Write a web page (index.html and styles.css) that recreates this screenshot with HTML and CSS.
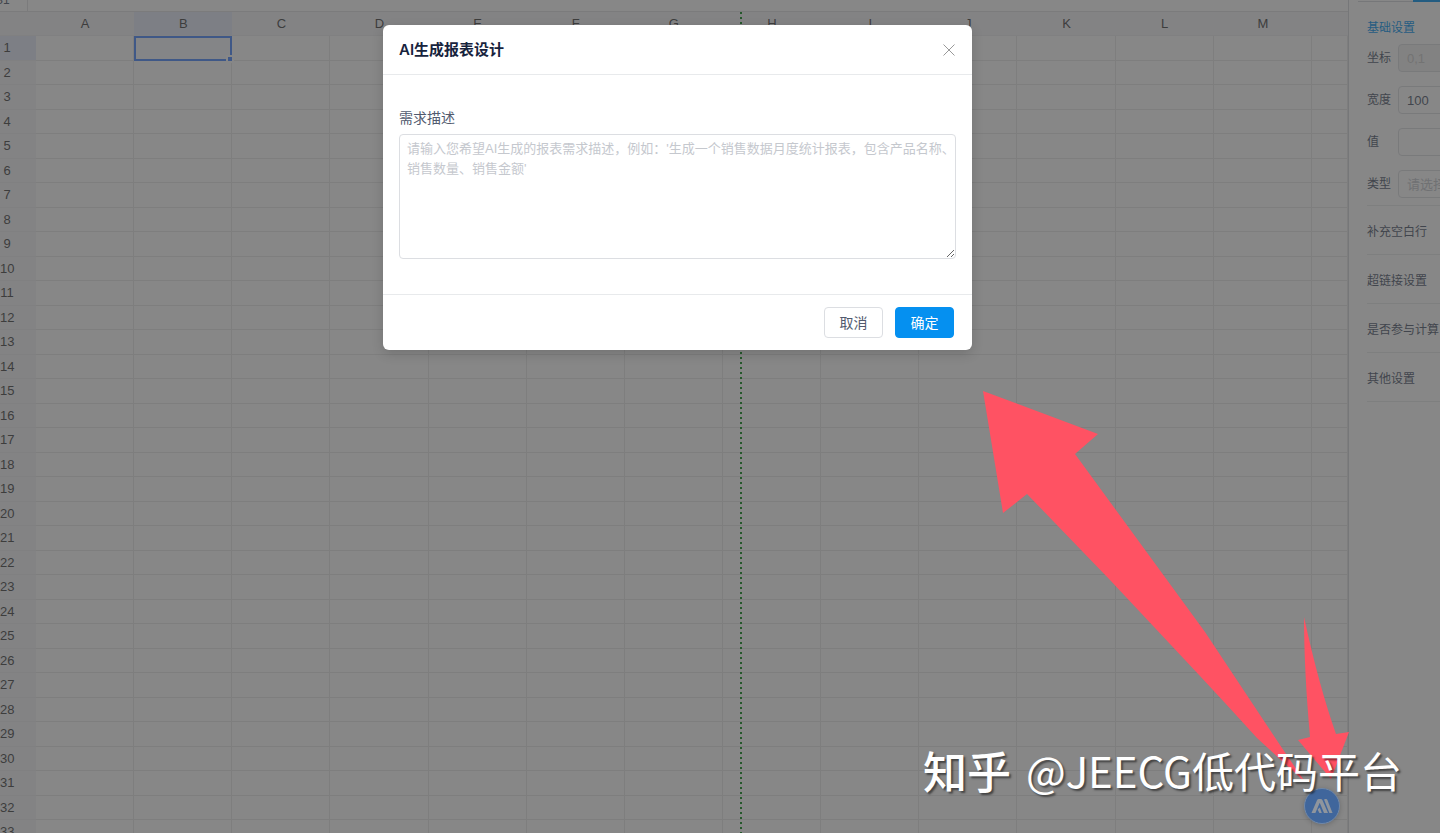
FILE: index.html
```
<!DOCTYPE html>
<html lang="zh-CN">
<head>
    <meta charset="UTF-8">
    <title>AI生成报表设计</title>
    <link rel="stylesheet" href="styles.css">
</head>
<body>
    <div class="designer">
        <main class="sheet">
            <div class="formula-bar"><span class="cell-name">B1</span></div>
            <div class="grid-wrap">
                <table class="grid" id="grid">
                    <thead><tr id="letters"></tr></thead>
                    <tbody id="rows"></tbody>
                </table>
                <!-- print page boundary -->
                <div class="page-break"></div>
            </div>
        </main>
        <aside class="panel">
            <div class="tabs"><span class="tab"></span><span class="tab active"></span></div>
            <form class="settings">
                <h2>基础设置</h2>
                <div class="field"><label for="coord">坐标</label><input id="coord" type="text" value="0,1" disabled></div>
                <div class="field"><label for="width">宽度</label><input id="width" type="text" value="100"></div>
                <div class="field"><label for="val">值</label><input id="val" type="text"></div>
                <div class="field"><label for="type">类型</label><select id="type"><option>请选择</option></select></div>
            </form>
            <div class="group">补充空白行</div>
            <div class="group">超链接设置</div>
            <div class="group">是否参与计算</div>
            <div class="group">其他设置</div>
        </aside>
    </div>

    <div class="mask">
        <div class="modal" role="dialog" aria-labelledby="modal-title">
            <header class="modal-header">
                <h1 id="modal-title">AI生成报表设计</h1>
                <button type="button" class="close" aria-label="关闭">
                    <svg width="12" height="12" viewBox="0 0 12 12"><path d="M0.5 0.5L11.5 11.5M11.5 0.5L0.5 11.5" stroke="#999" fill="none"/></svg>
                </button>
            </header>
            <div class="modal-body">
                <label for="demand">需求描述</label>
                <textarea id="demand" placeholder="请输入您希望AI生成的报表需求描述，例如：'生成一个销售数据月度统计报表，包含产品名称、销售数量、销售金额'"></textarea>
            </div>
            <footer class="modal-footer">
                <button type="button" class="btn">取消</button>
                <button type="button" class="btn primary">确定</button>
            </footer>
        </div>
    </div>

    <button type="button" class="ai-button" aria-label="AI">
        <svg width="22" height="16" viewBox="0 0 22 16">
            <path d="M0.5 15L6 2.2Q6.6 1 8 1H10V5H8.6L4.4 15Z" fill="#8f959d"/>
            <path d="M9.5 1Q11 1 11.5 2.2L17 15H13L8.6 4.5Z" fill="#8f959d"/>
            <path d="M6.6 11.5L8.8 9.6L10.8 15H8.4Z" fill="#8f959d"/>
            <path d="M13.4 1H15.2Q16 1 16.4 2L21.5 15H18.4L13.4 2.6Z" fill="#8f959d"/>
        </svg>
    </button>

    <svg class="arrows" width="370" height="400" viewBox="0 0 370 400">
        <path d="M3 11L118 54L95 74L225 252L302 368L325 402L277 358Q248 326 220 296L130 200L47 114L23 133Z" fill="#ff5263"/>
        <path d="M324 237Q339 306 356 354L369 352L351 399L318 360L330 357Q324 290 324 237Z" fill="#ff5263"/>
    </svg>
    <div class="watermark"><b>知乎</b> <span>@JEECG低代码平台</span></div>

    <script>
        var letters = document.getElementById('letters');
        var rows = document.getElementById('rows');
        var names = ['', 'A', 'B', 'C', 'D', 'E', 'F', 'G', 'H', 'I', 'J', 'K', 'L', 'M', ''];

        names.forEach(function(name) {
            var th = document.createElement('th');
            th.textContent = name;
            if (name === 'B') th.className = 'current';
            letters.appendChild(th);
        });

        for (var r = 1; r <= 33; r++) {
            var tr = document.createElement('tr');
            var th = document.createElement('th');
            th.textContent = r;
            if (r === 1) th.className = 'current';
            tr.appendChild(th);
            for (var c = 1; c < names.length; c++) {
                var td = document.createElement('td');
                if (r === 1 && c === 2) td.className = 'selected';
                tr.appendChild(td);
            }
            rows.appendChild(tr);
        }
    </script>
</body>
</html>
```

FILE: styles.css
```
* {
    box-sizing: border-box;
}
body {
    margin: 0;
    height: 100vh;
    overflow: hidden;
    position: relative;
    font-family: "Liberation Sans", "Noto Sans CJK SC", sans-serif;
    color: #515a6e;
    background-color: #fff;
}
button, input, select, textarea {
    font-family: inherit;
}
.designer {
    display: flex;
    height: 100%;
    overflow: hidden;
}

/* spreadsheet */
.sheet {
    flex: 1;
    min-width: 0;
    overflow: hidden;
}
.formula-bar {
    display: flex;
    align-items: flex-end;
    height: 12px;
    overflow: hidden;
    border-bottom: 1px solid #e0e2e4;
}
.cell-name {
    width: 28px;
    height: 100%;
    border-right: 1px solid #e0e2e4;
    font-size: 12px;
    line-height: 0;
    text-indent: -5px;
}
.grid-wrap {
    position: relative;
}
.grid {
    width: 100%;
    table-layout: fixed;
    border-collapse: separate;
    border-spacing: 0;
}
.grid th {
    height: 24px;
    padding: 0;
    background-color: #f4f5f8;
    font-size: 13px;
    font-weight: normal;
    line-height: 22px;
    color: #484848;
    border-bottom: 1px solid #ededf0;
}
.grid th:first-child {
    width: 36px;
    padding-right: 22px;
}
.grid th:last-child {
    width: 36px;
}
.grid th.current {
    background-color: #e6ecfb;
}
.grid td {
    height: 24px;
    padding: 0;
    border-right: 1px solid #e8e8e8;
    border-bottom: 1px solid #e8e8e8;
}
.grid tbody tr:nth-child(odd) td {
    height: 25px;
}
.grid td.selected {
    border: 2px solid #4b89ff;
    background-color: #f7f9ff;
    position: relative;
}
.selected::after {
    content: "";
    position: absolute;
    right: -4px;
    bottom: -4px;
    box-sizing: content-box;
    width: 4px;
    height: 4px;
    border: 2px solid #fff;
    background-color: #4b89ff;
}
.page-break {
    position: absolute;
    top: 0;
    left: 740px;
    width: 2px;
    height: 100%;
    background: repeating-linear-gradient(#0a8a1a 0 2px, transparent 2px 5px);
}

/* property panel */
.panel {
    width: 92px;
    overflow: hidden;
    border-left: 1px solid #d5d7db;
    padding-left: 18px;
    font-size: 12px;
    white-space: nowrap;
}
.tabs {
    display: flex;
    height: 2px;
    margin-left: -9px;
}
.tab {
    width: 55px;
    flex-shrink: 0;
    border-bottom: 1px solid #d5d7db;
}
.tab.active {
    border-bottom: 2px solid #0595f0;
}
.settings {
    border-bottom: 1px solid #e8eaec;
    height: 204px;
}
.settings h2 {
    margin: 0;
    padding-top: 16px;
    font-size: 12px;
    font-weight: normal;
    line-height: 20px;
    color: #0595f0;
}
.field {
    display: flex;
    height: 28px;
    margin: 6px 0 14px;
}
.field + .field {
    margin-top: 0;
}
.field label {
    width: 31px;
    flex-shrink: 0;
    line-height: 28px;
}
.field input,
.field select {
    width: 150px;
    flex-shrink: 0;
    height: 28px;
    padding: 0 8px;
    border: 1px solid #dcdee2;
    border-radius: 4px;
    background-color: #fff;
    font-size: 13px;
    color: #515a6e;
}
.field select {
    appearance: none;
    color: #c5c8ce;
}
.field input:disabled {
    background-color: #f3f3f3;
    color: #ccc;
}
.group {
    height: 49px;
    line-height: 52px;
    border-bottom: 1px solid #e8eaec;
}

/* dialog */
.mask {
    position: absolute;
    inset: 0;
    display: flex;
    justify-content: center;
    align-items: flex-start;
    padding: 25px 85px 0 0;
    background-color: rgba(55, 55, 55, 0.6);
}
.modal {
    width: 589px;
    background-color: #fff;
    border-radius: 6px;
    box-shadow: 0 4px 12px rgba(0, 0, 0, 0.15);
}
.modal-header {
    display: flex;
    justify-content: space-between;
    align-items: center;
    height: 50px;
    padding: 0 16px;
    border-bottom: 1px solid #e8eaec;
}
.modal-header h1 {
    margin: 0;
    font-family: Inter, "Noto Sans CJK SC", sans-serif;
    font-size: 15px;
    font-weight: 600;
    line-height: 20px;
    color: #17233d;
}
.close {
    display: flex;
    padding: 1px;
    border: 0;
    background: none;
    cursor: pointer;
}
.modal-body {
    padding: 32px 16px 35px;
}
.modal-body label {
    display: block;
    margin-bottom: 5px;
    font-size: 14px;
    line-height: 22px;
}
.modal-body textarea {
    display: block;
    width: 100%;
    height: 125px;
    padding: 4px 0 4px 7px;
    border: 1px solid #dcdee2;
    border-radius: 4px;
    outline: none;
    font-size: 13px;
    line-height: 20px;
    resize: vertical;
}
.modal-body textarea::placeholder {
    color: #c5c8ce;
}
.modal-footer {
    display: flex;
    justify-content: flex-end;
    gap: 12px;
    padding: 12px 18px;
    border-top: 1px solid #e8eaec;
}
.btn {
    width: 59px;
    height: 31px;
    padding: 0 0 2px;
    border: 1px solid #dcdee2;
    border-radius: 4px;
    background-color: #fff;
    font-size: 14px;
    color: #515a6e;
    cursor: pointer;
}
.btn.primary {
    border-color: #0590f0;
    background-color: #0590f0;
    color: #fff;
}

/* floating things */
.ai-button {
    position: absolute;
    right: 100px;
    bottom: 9px;
    display: flex;
    align-items: center;
    justify-content: center;
    width: 36px;
    height: 36px;
    padding: 0;
    border: 1px solid #7088a8;
    border-radius: 50%;
    background-color: #40669c;
    box-shadow: 0 1px 5px rgba(0, 0, 0, 0.2);
}
.arrows {
    position: absolute;
    right: 90px;
    bottom: 53px;
}
.watermark {
    position: absolute;
    right: 38px;
    bottom: 33px;
    display: flex;
    align-items: center;
    gap: 15px;
    font-family: "Noto Sans CJK SC", sans-serif;
    font-size: 42px;
    line-height: 60px;
    white-space: nowrap;
    color: #fff;
    text-shadow: 2px 2px 2px rgba(0, 0, 0, 0.5);
}
.watermark b {
    font-size: 44px;
    font-weight: 500;
}
```
